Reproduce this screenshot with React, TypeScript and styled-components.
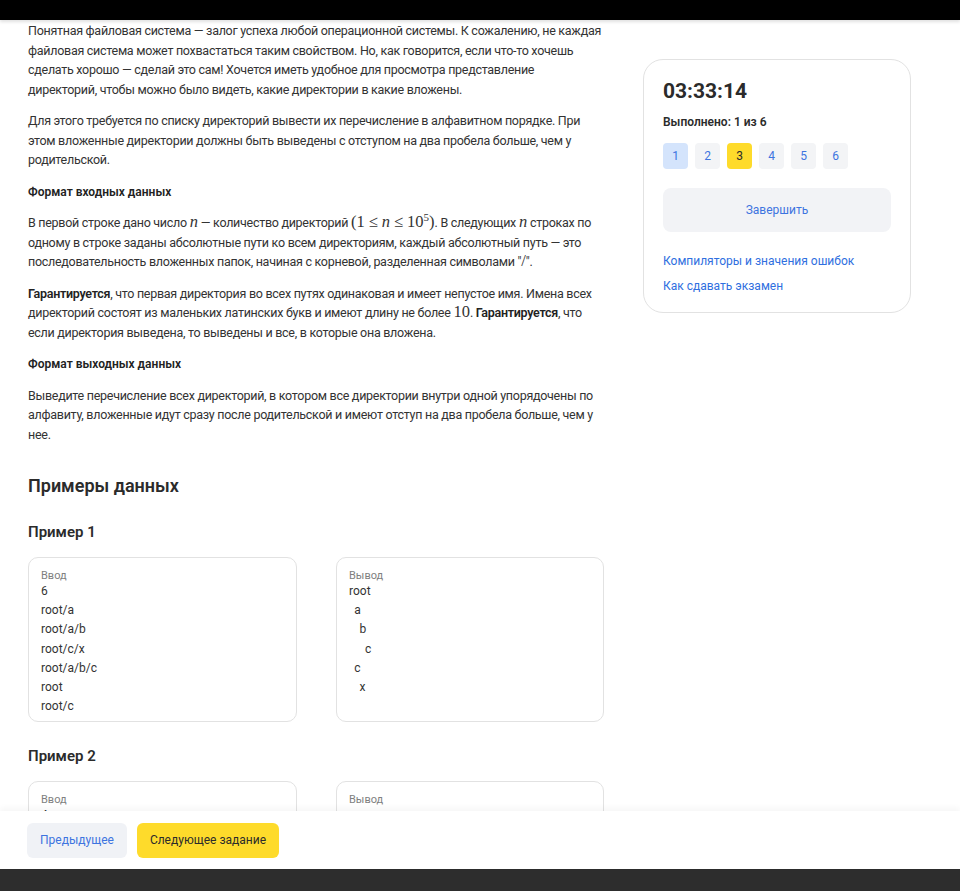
import React from 'react';
import styled, { createGlobalStyle } from 'styled-components';

const Global = createGlobalStyle`
  html, body { margin: 0; padding: 0; background: #fff; }
  body { font-family: Roboto, "Noto Sans", sans-serif; color: #333; -webkit-font-smoothing: antialiased; }
`;

const Screen = styled.div`
  height: 891px;
  display: flex;
  flex-direction: column;
  overflow: hidden;
`;

const TopBar = styled.div`
  flex: none;
  height: 20px;
  background: #000;
  position: relative;
  z-index: 2;
  box-shadow: 0 2px 3px rgba(0, 0, 0, 0.12);
`;

const Viewport = styled.div`
  flex: 1;
  min-height: 0;
  overflow: hidden;
`;

const Layout = styled.div`
  display: flex;
  align-items: flex-start;
  gap: 40px;
  padding: 1px 0 0 28px;
`;

const Article = styled.div`
  width: 575px;
  flex: none;
`;

const P = styled.p`
  margin: 0 0 12px;
  font-size: 12.5px;
  letter-spacing: -0.28px;
  line-height: 19.5px;
  color: #333;
`;

const Strong = styled.b`
  font-weight: 600;
  color: #222;
`;

const Math = styled.span`
  font-family: "Liberation Serif", "DejaVu Serif", serif;
  font-size: 16.5px;
  letter-spacing: 0;
  line-height: 0;
`;

const MathVar = styled(Math)`
  font-style: italic;
`;

const Rel = styled.span`
  margin: 0 4px;
`;

const Sup = styled.sup`
  font-size: 11px;
  line-height: 0;
`;

const SubHead = styled.h4`
  margin: 0 0 11px;
  padding-top: 1px;
  font-size: 12px;
  line-height: 19.5px;
  font-weight: 600;
  color: #222;
`;

const SectionTitle = styled.h2`
  margin: 30px 0 0;
  font-size: 18px;
  line-height: 24px;
  font-weight: 600;
  color: #2b2b2b;
`;

const ExampleTitle = styled.h3`
  margin: 24px 0 15px;
  font-size: 15px;
  line-height: 20px;
  font-weight: 600;
  color: #2b2b2b;
`;

const ExampleGrid = styled.div`
  display: grid;
  grid-template-columns: 269px 268px;
  gap: 39px;
`;

const IOBox = styled.div`
  border: 1px solid #e2e2e2;
  border-radius: 10px;
  padding: 11px 12px 5px;
`;

const IOLabel = styled.div`
  font-size: 11px;
  line-height: 13px;
  color: #808080;
`;

const IOLine = styled.div<{ $indent?: number }>`
  font-size: 12px;
  line-height: 19.2px;
  color: #333;
  white-space: pre;
  padding-left: ${(p) => (p.$indent ?? 0) * 5.3}px;
`;

const Sidebar = styled.aside`
  margin-top: 38px;
  width: 268px;
  box-sizing: border-box;
  border: 1px solid #e2e2e2;
  border-radius: 20px;
  padding: 17px 19px 18px;
`;

const Timer = styled.div`
  font-size: 21px;
  line-height: 28px;
  font-weight: 700;
  color: #2b2b2b;
`;

const Progress = styled.div`
  margin-top: 9px;
  font-size: 12px;
  line-height: 16px;
  font-weight: 600;
  color: #2b2b2b;
`;

const TaskRow = styled.div`
  margin-top: 13px;
  display: flex;
  gap: 7px;
`;

const TaskBtn = styled.div<{ $state: 'done' | 'current' | 'todo' }>`
  width: 25px;
  height: 26px;
  border-radius: 4px;
  display: flex;
  align-items: center;
  justify-content: center;
  font-size: 12px;
  background: ${(p) => (p.$state === 'done' ? '#d4e4fc' : p.$state === 'current' ? '#fedb2b' : '#f3f4f6')};
  color: ${(p) => (p.$state === 'current' ? '#2b2b2b' : '#3d74e0')};
`;

const FinishBtn = styled.div`
  margin-top: 19px;
  height: 44px;
  border-radius: 8px;
  background: #f2f3f6;
  color: #3d74e0;
  font-size: 12px;
  display: flex;
  align-items: center;
  justify-content: center;
`;

const Links = styled.div`
  margin-top: 21px;
  display: flex;
  flex-direction: column;
  gap: 9px;
`;

const SideLink = styled.a`
  font-size: 12px;
  line-height: 16px;
  color: #2f6fe0;
  text-decoration: none;
`;

const BottomBar = styled.div`
  flex: none;
  height: 58px;
  background: #fff;
  position: relative;
  z-index: 2;
  box-shadow: 0 -3px 6px rgba(0, 0, 0, 0.04);
  display: flex;
  align-items: center;
  gap: 10px;
  padding: 0 27px;
`;

const NavBtn = styled.div<{ $primary?: boolean }>`
  height: 35px;
  padding: 0 13px;
  border-radius: 6px;
  display: flex;
  align-items: center;
  font-size: 12px;
  background: ${(p) => (p.$primary ? '#fedb2b' : '#f0f2f6')};
  color: ${(p) => (p.$primary ? '#2b2b2b' : '#3d74e0')};
`;

const Footer = styled.div`
  flex: none;
  height: 22px;
  background: #2d2d2d;
`;

const ex1In = ['6', 'root/a', 'root/a/b', 'root/c/x', 'root/a/b/c', 'root', 'root/c'];
const ex1Out: [string, number][] = [['root', 0], ['a', 1], ['b', 2], ['c', 3], ['c', 1], ['x', 2]];

export default function App() {
  return (
    <>
      <Global />
      <Screen>
        <TopBar />
        <Viewport>
          <Layout>
            <Article>
              <P>
                Понятная файловая система — залог успеха любой операционной системы. К сожалению, не каждая
                файловая система может похвастаться таким свойством. Но, как говорится, если что-то хочешь
                сделать хорошо — сделай это сам! Хочется иметь удобное для просмотра представление
                директорий, чтобы можно было видеть, какие директории в какие вложены.
              </P>
              <P>
                Для этого требуется по списку директорий вывести их перечисление в алфавитном порядке. При
                этом вложенные директории должны быть выведены с отступом на два пробела больше, чем у
                родительской.
              </P>
              <SubHead>Формат входных данных</SubHead>
              <P>
                В первой строке дано число <MathVar>n</MathVar> — количество директорий{' '}
                <Math>
                  (1<Rel>≤</Rel>
                  <MathVar>n</MathVar>
                  <Rel>≤</Rel>10<Sup>5</Sup>)
                </Math>
                . В следующих <MathVar>n</MathVar> строках по одному в строке заданы абсолютные пути ко всем
                директориям, каждый абсолютный путь — это последовательность вложенных папок, начиная с
                корневой, разделенная символами "<Math>/</Math>".
              </P>
              <P>
                <Strong>Гарантируется</Strong>, что первая директория во всех путях одинаковая и имеет непустое
                имя. Имена всех директорий состоят из маленьких латинских букв и имеют длину не более{' '}
                <Math>10</Math>. <Strong>Гарантируется</Strong>, что если директория выведена, то выведены и
                все, в которые она вложена.
              </P>
              <SubHead>Формат выходных данных</SubHead>
              <P>
                Выведите перечисление всех директорий, в котором все директории внутри одной упорядочены по
                алфавиту, вложенные идут сразу после родительской и имеют отступ на два пробела больше, чем у
                нее.
              </P>
              <SectionTitle>Примеры данных</SectionTitle>
              <ExampleTitle>Пример 1</ExampleTitle>
              <ExampleGrid>
                <IOBox>
                  <IOLabel>Ввод</IOLabel>
                  {ex1In.map((l, i) => (
                    <IOLine key={i}>{l}</IOLine>
                  ))}
                </IOBox>
                <IOBox>
                  <IOLabel>Вывод</IOLabel>
                  {ex1Out.map(([l, d], i) => (
                    <IOLine key={i} $indent={d}>
                      {l}
                    </IOLine>
                  ))}
                </IOBox>
              </ExampleGrid>
              <ExampleTitle>Пример 2</ExampleTitle>
              <ExampleGrid>
                <IOBox>
                  <IOLabel>Ввод</IOLabel>
                  {['4', 'a/b', 'a/c', 'a'].map((l, i) => (
                    <IOLine key={i}>{l}</IOLine>
                  ))}
                </IOBox>
                <IOBox>
                  <IOLabel>Вывод</IOLabel>
                  {['a', 'b', 'c'].map((l, i) => (
                    <IOLine key={i} $indent={i ? 1 : 0}>
                      {l}
                    </IOLine>
                  ))}
                </IOBox>
              </ExampleGrid>
            </Article>
            <Sidebar>
              <Timer>03:33:14</Timer>
              <Progress>Выполнено: 1 из 6</Progress>
              <TaskRow>
                <TaskBtn $state="done">1</TaskBtn>
                <TaskBtn $state="todo">2</TaskBtn>
                <TaskBtn $state="current">3</TaskBtn>
                <TaskBtn $state="todo">4</TaskBtn>
                <TaskBtn $state="todo">5</TaskBtn>
                <TaskBtn $state="todo">6</TaskBtn>
              </TaskRow>
              <FinishBtn>Завершить</FinishBtn>
              <Links>
                <SideLink href="#">Компиляторы и значения ошибок</SideLink>
                <SideLink href="#">Как сдавать экзамен</SideLink>
              </Links>
            </Sidebar>
          </Layout>
        </Viewport>
        <BottomBar>
          <NavBtn>Предыдущее</NavBtn>
          <NavBtn $primary>Следующее задание</NavBtn>
        </BottomBar>
        <Footer />
      </Screen>
    </>
  );
}
